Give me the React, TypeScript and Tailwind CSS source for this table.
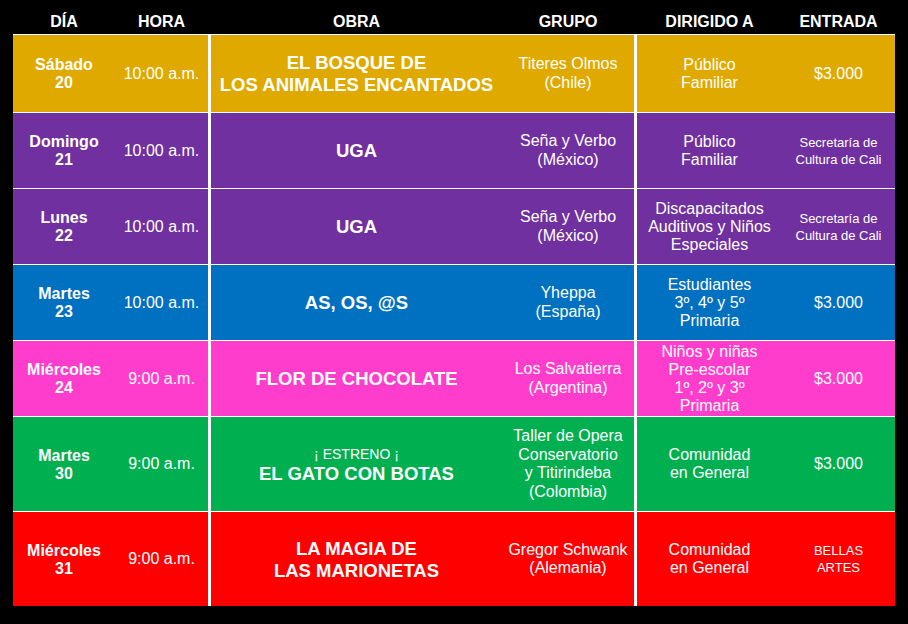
import React from "react";

type Row = {
  bg: string;
  h: string;
  day: string[];
  hora: string;
  estreno?: boolean;
  obra: string[];
  grupo: string[];
  dirigido: string[];
  entrada: string[];
  entradaSmall?: boolean;
};

const rows: Row[] = [
  {
    bg: "bg-[#dfa900]",
    h: "h-[78px]",
    day: ["Sábado", "20"],
    hora: "10:00 a.m.",
    obra: ["EL BOSQUE DE", "LOS ANIMALES ENCANTADOS"],
    grupo: ["Titeres Olmos", "(Chile)"],
    dirigido: ["Público", "Familiar"],
    entrada: ["$3.000"],
  },
  {
    bg: "bg-[#7030a0]",
    h: "h-[76px]",
    day: ["Domingo", "21"],
    hora: "10:00 a.m.",
    obra: ["UGA"],
    grupo: ["Seña y Verbo", "(México)"],
    dirigido: ["Público", "Familiar"],
    entrada: ["Secretaría de", "Cultura de Cali"],
    entradaSmall: true,
  },
  {
    bg: "bg-[#7030a0]",
    h: "h-[76px]",
    day: ["Lunes", "22"],
    hora: "10:00 a.m.",
    obra: ["UGA"],
    grupo: ["Seña y Verbo", "(México)"],
    dirigido: ["Discapacitados", "Auditivos y Niños", "Especiales"],
    entrada: ["Secretaría de", "Cultura de Cali"],
    entradaSmall: true,
  },
  {
    bg: "bg-[#0070c0]",
    h: "h-[76px]",
    day: ["Martes", "23"],
    hora: "10:00 a.m.",
    obra: ["AS, OS, @S"],
    grupo: ["Yheppa", "(España)"],
    dirigido: ["Estudiantes", "3º, 4º y 5º", "Primaria"],
    entrada: ["$3.000"],
  },
  {
    bg: "bg-[#ff3dcc]",
    h: "h-[76px]",
    day: ["Miércoles", "24"],
    hora: "9:00 a.m.",
    obra: ["FLOR DE CHOCOLATE"],
    grupo: ["Los Salvatierra", "(Argentina)"],
    dirigido: ["Niños y niñas", "Pre-escolar", "1º, 2º y 3º", "Primaria"],
    entrada: ["$3.000"],
  },
  {
    bg: "bg-[#00b050]",
    h: "h-[95px]",
    day: ["Martes", "30"],
    hora: "9:00 a.m.",
    estreno: true,
    obra: ["EL GATO CON BOTAS"],
    grupo: ["Taller de Opera", "Conservatorio", "y Titirindeba", "(Colombia)"],
    dirigido: ["Comunidad", "en General"],
    entrada: ["$3.000"],
  },
  {
    bg: "bg-[#ff0000]",
    h: "h-[95px]",
    day: ["Miércoles", "31"],
    hora: "9:00 a.m.",
    obra: ["LA MAGIA DE", "LAS MARIONETAS"],
    grupo: ["Gregor Schwank", "(Alemania)"],
    dirigido: ["Comunidad", "en General"],
    entrada: ["BELLAS", "ARTES"],
    entradaSmall: true,
  },
];

const Lines = ({ lines }: { lines: string[] }) => (
  <>
    {lines.map((l, i) => (
      <div key={i}>{l}</div>
    ))}
  </>
);

export default function App() {
  return (
    <div
      className="w-[908px] h-[624px] bg-black text-white overflow-hidden pl-[13px]"
      style={{ fontFamily: '"Liberation Sans", Arial, sans-serif' }}
    >
      <div className="w-[882px]">
        {/* header */}
        <div className="flex h-[34px] pt-[13px] text-[16px] leading-[18px] font-bold text-center">
          <div className="w-[102px]">DÍA</div>
          <div className="w-[93px]">HORA</div>
          <div className="w-[294px] pl-[3px]">OBRA</div>
          <div className="w-[132px]">GRUPO</div>
          <div className="w-[148px] pl-[3px]">DIRIGIDO A</div>
          <div className="w-[113px]">ENTRADA</div>
        </div>
        {rows.map((r, i) => (
          <div
            key={i}
            className={`flex ${r.h} ${r.bg} border-t border-white text-center`}
          >
            <div className="w-[102px] flex flex-col justify-center pt-[1px] font-bold text-[16px] leading-[18px]">
              <Lines lines={r.day} />
            </div>
            <div className="w-[93px] flex flex-col justify-center text-[16px] leading-[18px]">
              {r.hora}
            </div>
            <div className="w-[294px] border-l-[3px] border-white flex flex-col justify-center pt-[1px]">
              {r.estreno && (
                <div className="text-[14px] leading-[18px]">¡ ESTRENO ¡</div>
              )}
              <div className="font-bold text-[18.5px] leading-[22px]">
                <Lines lines={r.obra} />
              </div>
            </div>
            <div className="w-[132px] flex flex-col justify-center text-[16px] leading-[18.5px]">
              <Lines lines={r.grupo} />
            </div>
            <div className="w-[148px] border-l-[3px] border-white flex flex-col justify-center text-[16px] leading-[18px]">
              <Lines lines={r.dirigido} />
            </div>
            <div
              className={`w-[113px] flex flex-col justify-center ${
                r.entradaSmall
                  ? "text-[13px] leading-[17px]"
                  : "text-[16px] leading-[18px]"
              }`}
            >
              <Lines lines={r.entrada} />
            </div>
          </div>
        ))}
      </div>
    </div>
  );
}
